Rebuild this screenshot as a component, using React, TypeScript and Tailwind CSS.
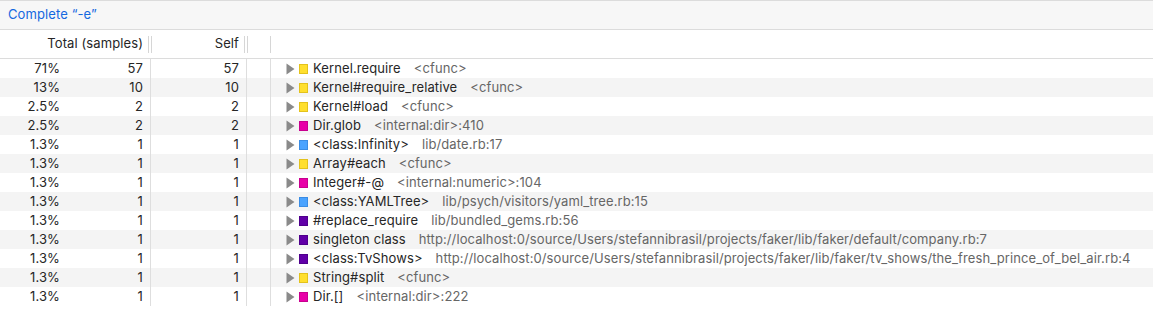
const rows = [
  { pct: "71%", total: "57", self: "57", color: "yellow", name: "Kernel.require", loc: "<cfunc>" },
  { pct: "13%", total: "10", self: "10", color: "yellow", name: "Kernel#require_relative", loc: "<cfunc>" },
  { pct: "2.5%", total: "2", self: "2", color: "yellow", name: "Kernel#load", loc: "<cfunc>" },
  { pct: "2.5%", total: "2", self: "2", color: "magenta", name: "Dir.glob", loc: "<internal:dir>:410" },
  { pct: "1.3%", total: "1", self: "1", color: "blue", name: "<class:Infinity>", loc: "lib/date.rb:17" },
  { pct: "1.3%", total: "1", self: "1", color: "yellow", name: "Array#each", loc: "<cfunc>" },
  { pct: "1.3%", total: "1", self: "1", color: "magenta", name: "Integer#-@", loc: "<internal:numeric>:104" },
  { pct: "1.3%", total: "1", self: "1", color: "blue", name: "<class:YAMLTree>", loc: "lib/psych/visitors/yaml_tree.rb:15" },
  { pct: "1.3%", total: "1", self: "1", color: "purple", name: "#replace_require", loc: "lib/bundled_gems.rb:56" },
  {
    pct: "1.3%",
    total: "1",
    self: "1",
    color: "purple",
    name: "singleton class",
    loc: "http://localhost:0/source/Users/stefannibrasil/projects/faker/lib/faker/default/company.rb:7",
  },
  {
    pct: "1.3%",
    total: "1",
    self: "1",
    color: "purple",
    name: "<class:TvShows>",
    loc: "http://localhost:0/source/Users/stefannibrasil/projects/faker/lib/faker/tv_shows/the_fresh_prince_of_bel_air.rb:4",
  },
  { pct: "1.3%", total: "1", self: "1", color: "yellow", name: "String#split", loc: "<cfunc>" },
  { pct: "1.3%", total: "1", self: "1", color: "magenta", name: "Dir.[]", loc: "<internal:dir>:222" },
];

const swatch: Record<string, string> = {
  yellow: "bg-[#ffdf2e] border-[#e3c21c]",
  magenta: "bg-[#e800a8] border-[#c8008f]",
  blue: "bg-[#4aa3ff] border-[#3a8ce4]",
  purple: "bg-[#6100a8] border-[#4f008c]",
};

function Resizer({ double = true }: { double?: boolean }) {
  return double ? (
    <div className="h-[17px] w-[4px] border-x border-[#d6d6d6]" />
  ) : (
    <div className="h-[17px] w-px bg-[#d6d6d6]" />
  );
}

export default function App() {
  return (
    <div className="w-[1153px] h-[318px] overflow-hidden bg-white font-['Inter','Liberation_Sans',sans-serif] text-[13px] tracking-[0.1px] text-[#262626]">
      <div className="h-[30px] border-y border-[#dcdcdc] bg-[#f7f7f7] flex items-center px-2 text-[#1468e0]">
        Complete “-e”
      </div>

      <div className="h-[29px] border-b border-[#dcdcdc] flex items-center">
        <div className="w-[152px] flex items-center justify-end">
          <span className="mr-[5px]">Total (samples)</span>
          <Resizer />
        </div>
        <div className="w-[96px] flex items-center justify-end">
          <span className="mr-[5px]">Self</span>
          <Resizer />
        </div>
        <div className="w-[23px] flex items-center justify-end">
          <Resizer double={false} />
        </div>
      </div>

      <div>
        {rows.map((r, i) => (
          <div key={i} className={`h-[19px] flex items-center ${i % 2 === 1 ? "bg-[#f4f4f4]" : ""}`}>
            <div className="w-[151px] h-full border-r border-[#dedede] flex items-center">
              <span className="w-[60px] text-right">{r.pct}</span>
              <span className="flex-1 text-right pr-[7px]">{r.total}</span>
            </div>
            <div className="w-[96px] h-full border-r border-[#dedede] flex items-center justify-end pr-[7px]">
              {r.self}
            </div>
            <div className="w-[24px] h-full border-r border-[#dedede]" />
            <div className="flex-1 h-full flex items-center pl-[15px] whitespace-nowrap">
              <svg width="9" height="12" viewBox="0 0 9 12" className="shrink-0">
                <path d="M0.5 0.5 L8.5 6 L0.5 11.5 Z" fill="#8a8a8a" />
              </svg>
              <span className={`ml-[4px] w-[9px] h-[10px] border shrink-0 ${swatch[r.color]}`} />
              <span className="ml-[5px]">{r.name}</span>
              <span className="ml-[13px] text-[#666666]">{r.loc}</span>
            </div>
          </div>
        ))}
      </div>
    </div>
  );
}
